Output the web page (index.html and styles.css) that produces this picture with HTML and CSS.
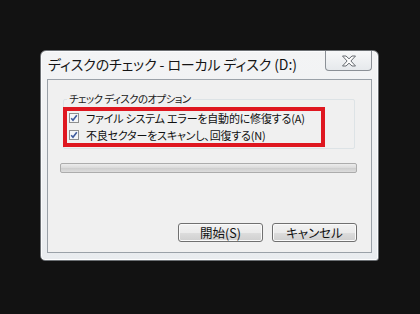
FILE: index.html
```html
<!DOCTYPE html>
<html lang="ja">
<head>
<meta charset="utf-8">
<link rel="stylesheet" href="styles.css">
</head>
<body>
<div class="screen">
  <div class="dialog">
    <div class="titlebar">
      <span class="title">ディスクのチェック - ローカル ディスク (D:)</span>
      <div class="close">
        <svg width="16" height="12" viewBox="0 0 16 12">
          <path d="M1.5 1h3.5l3 2.8 3-2.8h3.5l-4.6 5 4.6 5h-3.5l-3-2.8-3 2.8h-3.5l4.6-5z" fill="#fdfdfd" stroke="#666b71" stroke-width="1" stroke-linejoin="round"/>
        </svg>
      </div>
    </div>
    <div class="client">
      <div class="group">
        <span class="legend">チェック ディスクのオプション</span>
        <label class="row">
          <svg class="cb" width="10" height="10" viewBox="0 0 10 10">
            <rect x="0.5" y="0.5" width="9" height="9" fill="#f4f6f8" stroke="#8e8f8f"/>
            <path d="M2.2 5.2l1.8 2 3.8-5" fill="none" stroke="#3d5a9c" stroke-width="1.6"/>
          </svg>
          <span>ファイル システム エラーを自動的に修復する(A)</span>
        </label>
        <label class="row">
          <svg class="cb" width="10" height="10" viewBox="0 0 10 10">
            <rect x="0.5" y="0.5" width="9" height="9" fill="#f4f6f8" stroke="#8e8f8f"/>
            <path d="M2.2 5.2l1.8 2 3.8-5" fill="none" stroke="#3d5a9c" stroke-width="1.6"/>
          </svg>
          <span>不良セクターをスキャンし、回復する(N)</span>
        </label>
        <div class="highlight"></div>
      </div>
      <div class="progress"></div>
      <div class="buttons">
        <button class="btn">開始(S)</button>
        <button class="btn">キャンセル</button>
      </div>
    </div>
  </div>
</div>
</body>
</html>
```

FILE: styles.css
```css
html, body {
  margin: 0;
  padding: 0;
  background: #121212;
}
body {
  width: 420px;
  height: 314px;
  overflow: hidden;
  font-family: "Noto Sans CJK JP", "Noto Sans", sans-serif;
  font-feature-settings: "palt";
}
.screen {
  padding: 50px 0 0 40px;
}
.dialog {
  box-sizing: border-box;
  width: 339px;
  height: 211px;
  border: 1px solid #6c7074;
  border-radius: 6px 6px 3px 5px;
  background: linear-gradient(#f3f4f5, #e9ecef);
  box-shadow: inset 0 0 0 1px #fbfcfd;
  padding: 0 6px 7px 6px;
  display: flex;
  flex-direction: column;
}
.titlebar {
  height: 28px;
  flex: none;
  display: flex;
  align-items: flex-start;
  justify-content: space-between;
}
.title {
  font-size: 14px;
  line-height: 16px;
  margin-top: 5px;
  margin-left: 1px;
  color: #151515;
  letter-spacing: -0.1px;
}
.close {
  box-sizing: border-box;
  width: 47px;
  height: 20px;
  border: 1px solid #8b9096;
  border-top: none;
  border-radius: 0 0 4px 4px;
  background: linear-gradient(#f7f8f9, #e6e9ec);
  display: flex;
  align-items: center;
  justify-content: center;
}
.client {
  flex: 1;
  border: 1px solid #9aa1a8;
  background: #f0f0f0;
  display: flex;
  flex-direction: column;
  padding: 0 14px 10px 12px;
}
.group {
  position: relative;
  margin: 19px 2px 0 3px;
  height: 50px;
  border: 1px solid #dde3e6;
  border-radius: 2px;
  padding: 10px 0 0 5px;
  box-sizing: border-box;
}
.legend {
  position: absolute;
  top: -9px;
  left: 3px;
  padding: 0 2px;
  background: #f0f0f0;
  font-size: 10.5px;
  line-height: 16px;
  letter-spacing: -0.6px;
  color: #1a1a1a;
}
.row {
  display: flex;
  align-items: center;
  gap: 7px;
  height: 16.5px;
  font-size: 11px;
  letter-spacing: -0.2px;
  color: #111;
}
.cb {
  flex: none;
}
.highlight {
  position: absolute;
  left: -1px;
  top: 7px;
  width: 254px;
  height: 32px;
  border: 4px solid #df1720;
}
.progress {
  margin: 14px 0 0 0;
  height: 8px;
  border: 1px solid #acacac;
  border-radius: 2px;
  background: linear-gradient(#ececec, #dadada 50%, #cdcdcd 51%, #dddddd);
}
.buttons {
  margin-top: auto;
  display: flex;
  justify-content: flex-end;
  gap: 9px;
}
.btn {
  width: 85px;
  height: 19px;
  padding: 0;
  border: 1px solid #707070;
  border-radius: 3px;
  background: linear-gradient(#f2f2f2, #ebebeb 50%, #dddddd 51%, #cfcfcf);
  box-shadow: inset 0 0 0 1px #fafafa;
  font-family: "Noto Sans CJK JP", sans-serif;
  font-feature-settings: "palt";
  font-size: 12.5px;
  line-height: 16px;
  color: #111;
}
```
